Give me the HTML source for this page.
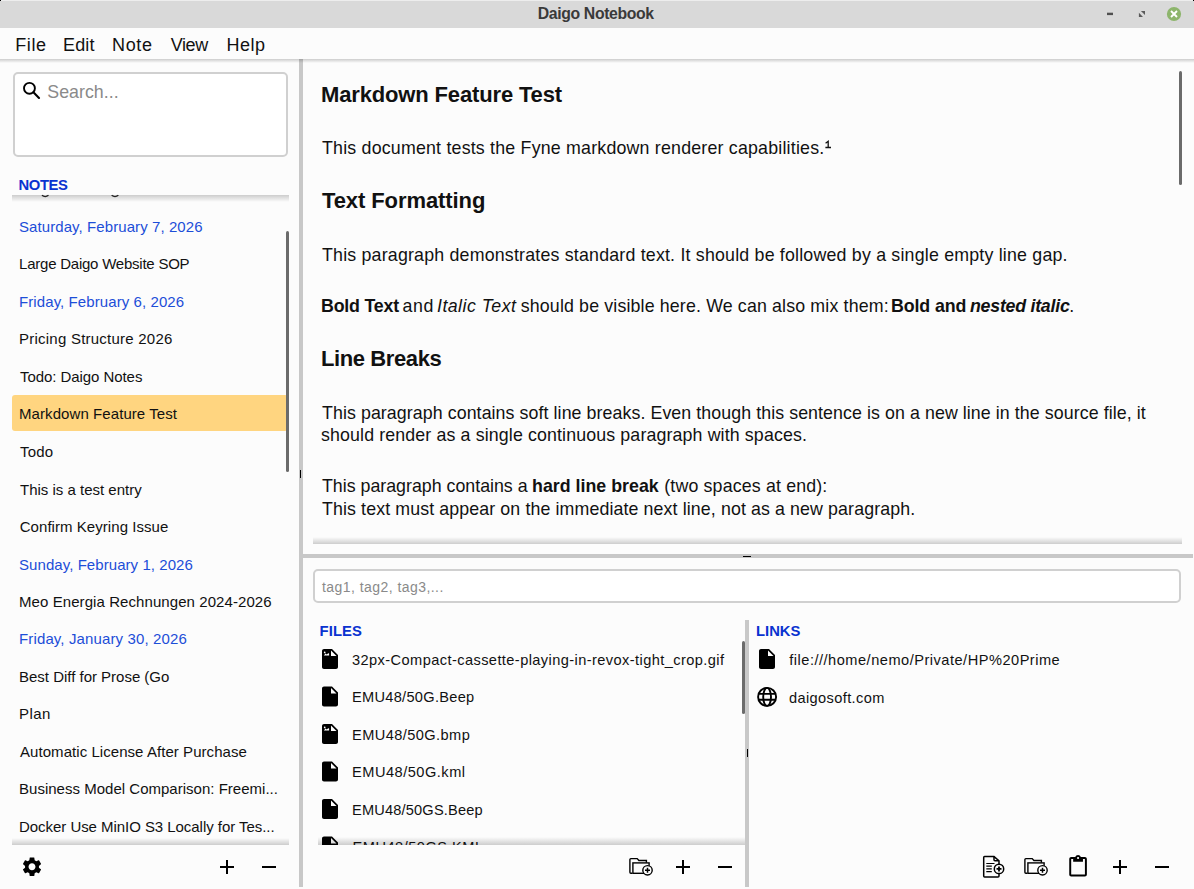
<!DOCTYPE html>
<html><head><meta charset="utf-8"><style>
html,body{margin:0;padding:0;}
body{width:1194px;height:889px;overflow:hidden;position:relative;background:#fcfcfc;font-family:"Liberation Sans",sans-serif;}
.a{position:absolute;}
.t{position:absolute;white-space:pre;line-height:30px;}
</style></head><body>
<!-- title bar -->
<div class="a" style="left:0;top:0;width:1194px;height:28px;background:#d9d9d9"></div>
<div class="a" style="left:0;top:0;width:1194px;height:1px;background:#ededed"></div>
<!-- menu bar -->
<div class="a" style="left:0;top:28px;width:1194px;height:31px;background:#fcfcfc"></div>
<!-- dividers -->
<div class="a" style="left:299px;top:59px;width:4px;height:828px;background:#c8c8c8"></div>
<div class="a" style="left:303px;top:554px;width:890px;height:4px;background:#c8c8c8"></div>
<div class="a" style="left:745px;top:620px;width:4px;height:267px;background:#c8c8c8"></div>
<div class="a" style="left:300px;top:470px;width:1px;height:8px;background:#000"></div>
<div class="a" style="left:743px;top:556px;width:8px;height:1px;background:#000"></div>
<div class="a" style="left:747px;top:749px;width:1px;height:8px;background:#000"></div>
<!-- menu shadow -->
<div class="a" style="left:0;top:59px;width:1194px;height:4px;background:linear-gradient(rgba(0,0,0,0.19),rgba(0,0,0,0))"></div>
<!-- search entry -->
<div class="a" style="left:13px;top:72px;width:271px;height:81px;background:#fff;border:2px solid #d0d0d0;border-radius:5px"></div>
<!-- notes selection -->
<div class="a" style="left:12px;top:395px;width:276px;height:35.5px;background:#ffd580;border-radius:3px"></div>
<!-- notes list shadows -->
<div class="a" style="left:12px;top:195px;width:277px;height:7px;background:linear-gradient(rgba(0,0,0,0.19),rgba(0,0,0,0))"></div>
<div class="a" style="left:12px;top:838px;width:277px;height:7px;background:linear-gradient(rgba(0,0,0,0),rgba(0,0,0,0.19))"></div>
<!-- scrollbars -->
<div class="a" style="left:286px;top:231px;width:3px;height:241px;background:#6b6b6b;border-radius:1.5px"></div>
<div class="a" style="left:1179px;top:71px;width:3px;height:114px;background:#6b6b6b;border-radius:1.5px"></div>
<div class="a" style="left:742px;top:641px;width:3px;height:73px;background:#6b6b6b;border-radius:1.5px"></div>
<!-- editor bottom shadow -->
<div class="a" style="left:313px;top:537px;width:869px;height:7px;background:linear-gradient(rgba(0,0,0,0),rgba(0,0,0,0.19))"></div>
<!-- tags entry -->
<div class="a" style="left:313px;top:569px;width:864px;height:30px;background:#fff;border:2px solid #d0d0d0;border-radius:5px"></div>
<!-- files partial row (clipped) -->
<div class="a" style="left:318px;top:820px;width:427px;height:25px;overflow:hidden">
  <svg width="427" height="40" style="position:absolute;left:0;top:0"><g transform="translate(0,14.5)"><path d="M6 2c-1.1 0-1.99.9-1.99 2L4 20c0 1.1.89 2 1.99 2H18c1.1 0 2-.9 2-2V8l-6-6H6z" fill="#000"/><path d="M13 9V3.5L18.5 9z" fill="#fff"/></g></svg>
  <div class="t" style="left:34.5px;top:12.4px;font-size:14.6px;letter-spacing:0.5px;color:#111">EMU48/50GS.KML</div>
</div>
<div class="a" style="left:318px;top:837px;width:427px;height:8px;background:linear-gradient(rgba(0,0,0,0),rgba(0,0,0,0.19))"></div>

<div class="t" style="left:537.80px;top:-1.07px;font-size:15.8px;letter-spacing:-0.369px;color:#3a3a3a;font-weight:bold">Daigo Notebook</div>
<div class="t" style="left:15.30px;top:29.66px;font-size:18px;letter-spacing:0.567px;color:#111111">File</div>
<div class="t" style="left:63.02px;top:29.66px;font-size:18px;letter-spacing:0.153px;color:#111111">Edit</div>
<div class="t" style="left:112.06px;top:29.66px;font-size:18px;letter-spacing:0.653px;color:#111111">Note</div>
<div class="t" style="left:170.76px;top:29.66px;font-size:18px;letter-spacing:-0.427px;color:#111111">View</div>
<div class="t" style="left:226.52px;top:29.66px;font-size:18px;letter-spacing:0.500px;color:#111111">Help</div>
<div class="t" style="left:47.28px;top:76.83px;font-size:17.8px;letter-spacing:0.025px;color:#8a8a8a">Search...</div>
<div class="t" style="left:18.50px;top:169.77px;font-size:14.8px;letter-spacing:-0.375px;color:#0a33d0;font-weight:bold">NOTES</div>
<div class="t" style="left:19.04px;top:211.54px;font-size:15px;letter-spacing:0.079px;color:#1d4ed8">Saturday, February 7, 2026</div>
<div class="t" style="left:19.04px;top:248.93px;font-size:15px;letter-spacing:-0.231px;color:#111111">Large Daigo Website SOP</div>
<div class="t" style="left:19.04px;top:286.69px;font-size:15px;letter-spacing:0.085px;color:#1d4ed8">Friday, February 6, 2026</div>
<div class="t" style="left:19.04px;top:323.99px;font-size:15px;letter-spacing:0.234px;color:#111111">Pricing Structure 2026</div>
<div class="t" style="left:20.04px;top:361.52px;font-size:15px;letter-spacing:-0.065px;color:#111111">Todo: Daigo Notes</div>
<div class="t" style="left:19.04px;top:399.05px;font-size:15px;letter-spacing:0.075px;color:#111111">Markdown Feature Test</div>
<div class="t" style="left:20.04px;top:436.58px;font-size:15px;letter-spacing:0.160px;color:#111111">Todo</div>
<div class="t" style="left:20.04px;top:474.55px;font-size:15px;letter-spacing:-0.002px;color:#111111">This is a test entry</div>
<div class="t" style="left:19.74px;top:511.64px;font-size:15px;letter-spacing:0.050px;color:#111111">Confirm Keyring Issue</div>
<div class="t" style="left:19.04px;top:549.69px;font-size:15px;letter-spacing:0.063px;color:#1d4ed8">Sunday, February 1, 2026</div>
<div class="t" style="left:19.04px;top:586.70px;font-size:15px;letter-spacing:0.078px;color:#111111">Meo Energia Rechnungen 2024-2026</div>
<div class="t" style="left:19.04px;top:624.13px;font-size:15px;letter-spacing:0.130px;color:#1d4ed8">Friday, January 30, 2026</div>
<div class="t" style="left:19.04px;top:661.76px;font-size:15px;letter-spacing:-0.013px;color:#111111">Best Diff for Prose (Go</div>
<div class="t" style="left:19.04px;top:699.28px;font-size:15px;letter-spacing:0.407px;color:#111111">Plan</div>
<div class="t" style="left:20.04px;top:736.82px;font-size:15px;letter-spacing:0.054px;color:#111111">Automatic License After Purchase</div>
<div class="t" style="left:19.04px;top:774.42px;font-size:15px;letter-spacing:0.013px;color:#111111">Business Model Comparison: Freemi...</div>
<div class="t" style="left:19.04px;top:811.88px;font-size:15px;letter-spacing:-0.048px;color:#111111">Docker Use MinIO S3 Locally for Tes...</div>
<div class="t" style="left:321.00px;top:79.91px;font-size:22px;letter-spacing:-0.150px;color:#111111;font-weight:bold">Markdown Feature Test</div>
<div class="t" style="left:322.00px;top:132.83px;font-size:17.8px;letter-spacing:0.203px;color:#111111">This document tests the Fyne markdown renderer capabilities.</div>
<div class="t" style="left:322.00px;top:186.25px;font-size:22px;letter-spacing:-0.089px;color:#111111;font-weight:bold">Text Formatting</div>
<div class="t" style="left:322.00px;top:239.73px;font-size:17.8px;letter-spacing:0.198px;color:#111111">This paragraph demonstrates standard text. It should be followed by a single empty line gap.</div>
<div class="t" style="left:321.00px;top:290.73px;font-size:17.8px;letter-spacing:-0.190px;color:#111111;font-weight:bold">Bold Text</div>
<div class="t" style="left:402.50px;top:290.73px;font-size:17.8px;letter-spacing:0.620px;color:#111111">and</div>
<div class="t" style="left:437.00px;top:290.73px;font-size:17.8px;letter-spacing:0.450px;color:#111111;font-style:italic">Italic Text</div>
<div class="t" style="left:520.74px;top:290.73px;font-size:17.8px;letter-spacing:0.147px;color:#111111">should be visible here. We can also mix them:</div>
<div class="t" style="left:891.00px;top:290.73px;font-size:17.8px;letter-spacing:-0.111px;color:#111111;font-weight:bold">Bold and</div>
<div class="t" style="left:970.00px;top:290.73px;font-size:17.8px;letter-spacing:-0.250px;color:#111111;font-weight:bold;font-style:italic">nested italic</div>
<div class="t" style="left:1069.30px;top:290.73px;font-size:17.8px;letter-spacing:0.000px;color:#111111">.</div>
<div class="t" style="left:321.00px;top:344.34px;font-size:22px;letter-spacing:-0.402px;color:#111111;font-weight:bold">Line Breaks</div>
<div class="t" style="left:322.00px;top:398.09px;font-size:17.8px;letter-spacing:0.078px;color:#111111">This paragraph contains soft line breaks. Even though this sentence is on a new line in the source file, it</div>
<div class="t" style="left:321.00px;top:420.33px;font-size:17.8px;letter-spacing:0.129px;color:#111111">should render as a single continuous paragraph with spaces.</div>
<div class="t" style="left:322.00px;top:471.33px;font-size:17.8px;letter-spacing:-0.001px;color:#111111">This paragraph contains a</div>
<div class="t" style="left:532.02px;top:471.33px;font-size:17.8px;letter-spacing:0.017px;color:#111111;font-weight:bold">hard line break</div>
<div class="t" style="left:664.24px;top:471.33px;font-size:17.8px;letter-spacing:0.156px;color:#111111">(two spaces at end):</div>
<div class="t" style="left:322.00px;top:493.93px;font-size:17.8px;letter-spacing:0.111px;color:#111111">This text must appear on the immediate next line, not as a new paragraph.</div>
<div class="t" style="left:322.00px;top:572.15px;font-size:14px;letter-spacing:0.446px;color:#8a8a8a">tag1, tag2, tag3,...</div>
<div class="t" style="left:319.52px;top:615.67px;font-size:14.8px;letter-spacing:0.120px;color:#0a33d0;font-weight:bold">FILES</div>
<div class="t" style="left:756.00px;top:615.87px;font-size:14.8px;letter-spacing:0.000px;color:#0a33d0;font-weight:bold">LINKS</div>
<div class="t" style="left:352.00px;top:644.94px;font-size:14.6px;letter-spacing:0.417px;color:#111111">32px-Compact-cassette-playing-in-revox-tight_crop.gif</div>
<div class="t" style="left:352.00px;top:682.44px;font-size:14.6px;letter-spacing:0.288px;color:#111111">EMU48/50G.Beep</div>
<div class="t" style="left:352.00px;top:719.94px;font-size:14.6px;letter-spacing:0.418px;color:#111111">EMU48/50G.bmp</div>
<div class="t" style="left:352.00px;top:757.44px;font-size:14.6px;letter-spacing:0.500px;color:#111111">EMU48/50G.kml</div>
<div class="t" style="left:352.00px;top:794.94px;font-size:14.6px;letter-spacing:0.177px;color:#111111">EMU48/50GS.Beep</div>
<div class="t" style="left:789.26px;top:644.94px;font-size:14.6px;letter-spacing:0.498px;color:#111111">file:///home/nemo/Private/HP%20Prime</div>
<div class="t" style="left:788.96px;top:682.94px;font-size:14.6px;letter-spacing:0.377px;color:#111111">daigosoft.com</div>
<svg class="a" style="left:0;top:0" width="1194" height="889">
<!-- window buttons -->
<rect x="1107" y="12.7" width="6" height="2.4" fill="#505050"/>
<path d="M1140.9 10.9H1145V14.9Z M1138.9 12.8V16.9H1143Z" fill="#5a5a5a"/>
<circle cx="1174" cy="14" r="7.1" fill="#8db56c"/>
<path d="M1171 11L1177 17M1177 11L1171 17" stroke="#fff" stroke-width="1.9"/>
<!-- search icon -->
<circle cx="29.45" cy="88.3" r="5.45" fill="none" stroke="#000" stroke-width="1.9"/>
<path d="M33.4 92.3L39 97.9" stroke="#000" stroke-width="2.1" stroke-linecap="round"/>
<!-- gear -->
<g transform="translate(20.36,855.16) scale(0.97)"><path fill="#000" d="M19.14 12.94c.04-.3.06-.61.06-.94 0-.32-.02-.64-.07-.94l2.03-1.58c.18-.14.23-.41.12-.61l-1.92-3.32c-.12-.22-.37-.29-.59-.22l-2.39.96c-.5-.38-1.03-.7-1.62-.94l-.36-2.54c-.04-.24-.24-.41-.48-.41h-3.84c-.24 0-.43.17-.47.41l-.36 2.54c-.59.24-1.13.57-1.62.94l-2.39-.96c-.22-.08-.47 0-.59.22L2.74 8.870c-.12.21-.08.47.12.61l2.03 1.58c-.05.3-.09.63-.09.94s.02.64.07.94l-2.03 1.58c-.18.14-.23.41-.12.61l1.92 3.32c.12.22.37.29.59.22l2.39-.96c.5.38 1.03.7 1.620.94l.36 2.54c.05.24.24.41.48.41h3.84c.24 0 .44-.17.47-.41l.36-2.54c.59-.24 1.13-.56 1.62-.94l2.39.96c.22.08.47 0 .59-.22l1.92-3.32c.12-.22.07-.47-.12-.61l-2.01-1.58zM12 15.6c-1.98 0-3.6-1.62-3.6-3.6s1.62-3.6 3.6-3.6 3.6 1.62 3.6 3.6-1.62 3.6-3.6 3.6z"/></g>
<!-- plus / minus -->
<g stroke="#000" stroke-width="2">
<path d="M220 867H234M227 860V874"/><path d="M262 867H276"/>
<path d="M676 867H690M683 860V874"/><path d="M718 867H732"/>
<path d="M1113 867H1127M1120 860V874"/><path d="M1155 867H1169"/>
</g>
<!-- file icons -->
<defs>
<g id="fi"><path d="M6 2c-1.1 0-1.99.9-1.99 2L4 20c0 1.1.89 2 1.99 2H18c1.1 0 2-.9 2-2V8l-6-6H6z" fill="#000"/><path d="M13 9V3.5L18.5 9z" fill="#fff"/></g>
<g id="fimg"><use href="#fi"/><path d="M5.9 8.5L7.5 6.6L8.8 7.4L10.2 6.2L11.1 6.5V8.5Z" fill="#fff"/><circle cx="6.7" cy="5.4" r="0.85" fill="#fff"/></g>
</defs>
<use href="#fimg" x="318" y="647"/>
<use href="#fi" x="318" y="684.5"/>
<use href="#fimg" x="318" y="722"/>
<use href="#fi" x="318" y="759.5"/>
<use href="#fi" x="318" y="797"/>
<use href="#fi" x="755" y="647"/>
<!-- globe -->
<g fill="none" stroke="#000" stroke-width="1.9">
<circle cx="767.1" cy="696.9" r="9"/>
<ellipse cx="767.1" cy="696.9" rx="3.9" ry="9"/>
<path d="M758.5 693.9H775.7M758.5 699.8H775.7"/>
</g>
<!-- folder add (files toolbar) -->
<g id="fadd" fill="none" stroke="#000" stroke-width="1.4">
<path d="M1027.2 873.3H1025.9Q1024.9 873.3 1024.9 872.3V859.6Q1024.9 858.6 1025.9 858.6H1032.2L1033.9 860.5H1041.4V862.8"/>
<rect x="1027.9" y="862.9" width="16.2" height="10.4" fill="#fcfcfc"/>
<circle cx="1042.5" cy="870.3" r="4.7" fill="#fcfcfc"/>
<path d="M1040 870.3H1045M1042.5 867.8V872.8" stroke-width="1.5"/>
</g>
<use href="#fadd" x="-395" y="0"/>
<!-- doc add -->
<g fill="none" stroke="#000" stroke-width="1.5">
<path d="M994 856.6H984.6Q983.7 856.6 983.7 857.6V876Q983.7 877 984.6 877H998Q999 877 999 876V860.8Z"/>
<path d="M994 856.6V859.8Q994 860.8 995 860.8H999"/>
<path d="M986.3 863.5H994.5M986.3 866.2H991.8M986.3 868.9H991.8M986.3 871.6H991.8" stroke-width="1.2"/>
<circle cx="999" cy="868.9" r="4.7" fill="#fcfcfc"/>
<path d="M996.5 868.9H1001.5M999 866.4V871.4" stroke-width="1.8"/>
</g>
<!-- clipboard -->
<g transform="translate(1066.3,855) scale(0.98)"><path fill="#000" d="M19 2h-4.18C14.4.84 13.3 0 12 0c-1.3 0-2.4.84-2.82 2H5c-1.1 0-2 .9-2 2v16c0 1.1.9 2 2 2h14c1.1 0 2-.9 2-2V4c0-1.1-.9-2-2-2zm-7 0c.55 0 1 .45 1 1s-.45 1-1 1-1-.45-1-1 .45-1 1-1zm7 18H5V4h2v3h10V4h2v16z"/></g>
<!-- superscript 1 -->
<path d="M825.6 143.2L828.2 141.3V147.6M825.4 147.5H831" fill="none" stroke="#111" stroke-width="1.3"/>
<!-- descender remnants above notes list -->
<path d="M41.9 195.3Q45.2 197.9 48.5 195.3M111.6 195.3Q115 197.9 118.4 195.3" fill="none" stroke="#222" stroke-width="1.3"/>
<rect x="0" y="0" width="1" height="1" fill="#000"/><rect x="1193" y="0" width="1" height="1" fill="#000"/>
</svg>

</body></html>
